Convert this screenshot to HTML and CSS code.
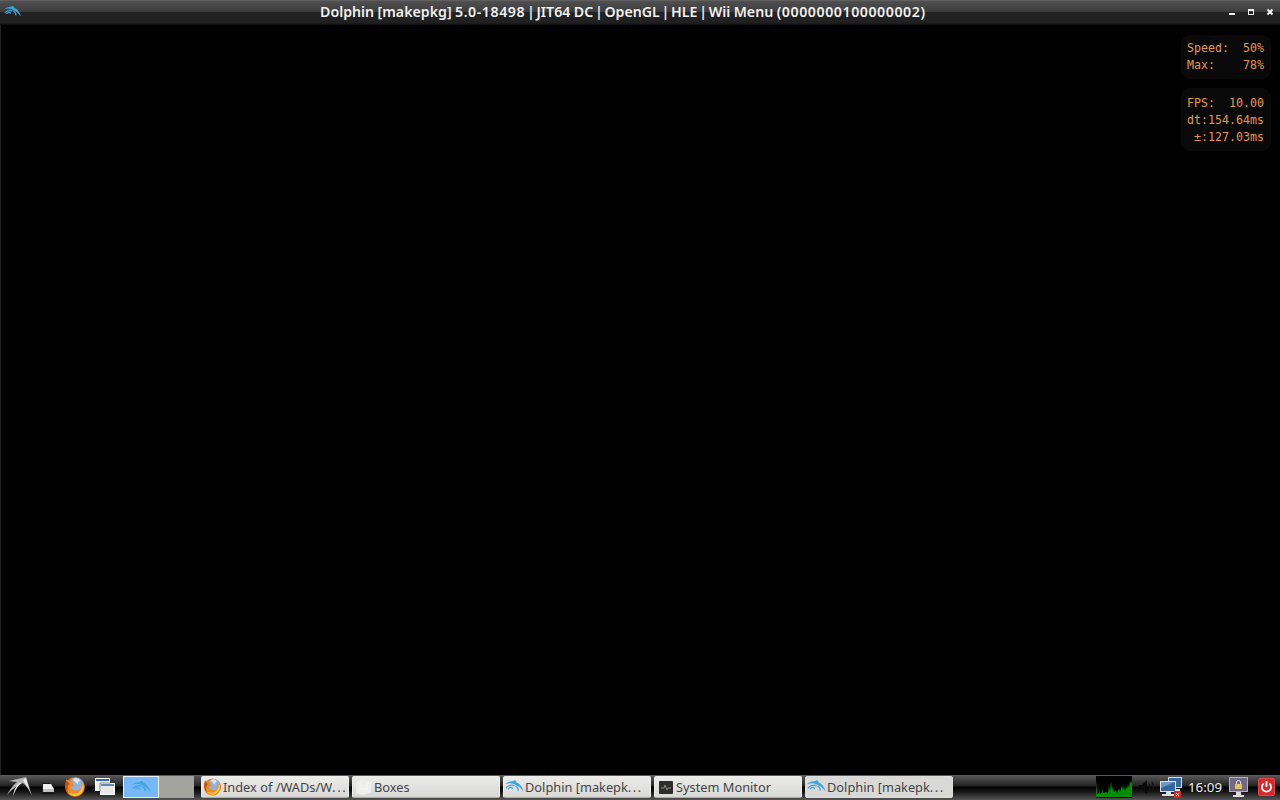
FILE: index.html
```
<!DOCTYPE html>
<html lang="en">
<head>
    <meta charset="UTF-8">
    <title>Dolphin</title>
    <link rel="stylesheet" href="styles.css">
</head>
<body>
    <!-- Shared icons -->
    <svg class="defs" width="0" height="0">
        <symbol id="dolphin" viewBox="0 0 20 16">
            <path d="M0 5Q3 2 8 2L10 1Q12 1 12 3Q17 5 20 13Q15 7 10 5Q5 3 0 5Z" fill="#3aa5df"/>
            <path d="M1 9Q5 5 10 6.5M3 10Q7 7 8 10M11 7Q14 8 14 12" fill="none" stroke="#3aa5df" stroke-width="1.3"/>
        </symbol>
        <symbol id="firefox" viewBox="0 0 20 20">
            <circle cx="10" cy="10" r="9" fill="#e77817"/>
            <circle cx="11" cy="8" r="6.5" fill="#8fb3d9"/>
            <path d="M8 3Q11 0 15 4Q12 5 13 8Q10 6 8 3Z" fill="#d4e5f3"/>
            <path d="M2 3Q4 5 8 5Q7 7 9 9L6 10Q8 14 13 13Q17 12 16 6Q20 11 16 16Q12 20 6 17Q0 13 2 3Z" fill="#ed8a22"/>
            <path d="M17 6Q20 12 14 17Q8 20 4 15Q12 18 15 13Q17 10 17 6Z" fill="#f9c646"/>
            <path d="M2 4Q0 11 4 16Q2 10 5 7Z" fill="#c4491b"/>
        </symbol>
    </svg>

    <div class="titlebar">
        <svg class="title-icon" width="19" height="14"><use href="#dolphin"/></svg>
        <div class="title">Dolphin [makepkg] <span class="num">5.0-18498</span> <span class="bar">|</span> JIT64 DC <span class="bar">|</span> OpenGL <span class="bar">|</span> HLE <span class="bar">|</span> Wii Menu <span class="num">(0000000100000002)</span></div>
        <svg class="window-buttons" width="48" height="24">
            <path d="M3 14H9" stroke="#eee" stroke-width="2"/>
            <path d="M22 9.5H28M22.5 9V15M27.5 9V15M22 14.5H28" stroke="#eee" stroke-width="1"/>
            <path d="M22 10H28" stroke="#eee" stroke-width="2"/>
            <path d="M41.5 9.5L46.5 14.5M46.5 9.5L41.5 14.5" stroke="#eee" stroke-width="2"/>
        </svg>
    </div>

    <div class="screen">
        <pre class="stats">Speed:  50%
Max:    78%</pre>
        <pre class="stats fps">FPS:  10.00
dt:154.64ms
 ±:127.03ms</pre>
    </div>

    <div class="taskbar">
        <div class="launchers">
            <svg width="34" height="22" viewBox="0 0 34 22">
                <path d="M9 5L26 1L32 20Q28 11 23 7Q16 9 7 19Q11 11 17 6Z" fill="#b5b5b5"/>
                <path d="M21 7Q16 12 13 20Q14 12 19 7ZM23 4L26 2L29 13Z" fill="#eee"/>
            </svg>
            <svg width="28" height="22" viewBox="0 0 28 22">
                <path d="M8 7H15L20 12V18H8Z" fill="#1b1b1b"/>
                <path d="M9 8H17L20 13H9Z" fill="#eee"/>
                <path d="M9 13H20V16H9Z" fill="#c2c2c2"/>
            </svg>
            <svg width="26" height="22" viewBox="0 0 26 22">
                <use href="#firefox" x="2" y="0" width="22" height="22"/>
            </svg>
            <svg width="33" height="22" viewBox="0 0 33 22">
                <rect x="7.5" y="2.5" width="14" height="12" fill="#eee" stroke="#fff"/>
                <rect x="8" y="3" width="13" height="2" fill="#3465a4"/>
                <rect x="12.5" y="7.5" width="14" height="11" fill="#e8e8e8" stroke="#fff"/>
                <path d="M12 7H22M12 7V15" stroke="#888"/>
                <rect x="13" y="8" width="13" height="2" fill="#6389b7"/>
            </svg>
        </div>
        <div class="pager">
            <div class="desk active"><svg width="19" height="15"><use href="#dolphin"/></svg></div>
            <div class="desk"></div>
        </div>
        <div class="tasks">
            <div class="task"><svg width="19" height="20"><use href="#firefox"/></svg><span>Index of /WADs/W<span class="dots">...</span></span></div>
            <div class="task">
                <svg width="19" height="20">
                    <path d="M2 5L9 3L17 5V16L9 18L2 16Z" fill="#eeeeec"/>
                    <path d="M3 15L6 12H13L16 15M6 12V5M13 12V5" fill="none" stroke="#f5f5f5"/>
                </svg><span>Boxes</span>
            </div>
            <div class="task"><svg width="19" height="18"><use href="#dolphin"/></svg><span>Dolphin [makepk<span class="dots">...</span></span></div>
            <div class="task">
                <svg width="19" height="20">
                    <rect x="3" y="4" width="14" height="13" rx="1" fill="#2d2d2d"/>
                    <path d="M5 11H8L9 8L11 13L12 11H15" fill="none" stroke="#888"/>
                </svg><span>System Monitor</span>
            </div>
            <div class="task last"><svg width="19" height="18"><use href="#dolphin"/></svg><span>Dolphin [makepk<span class="dots">...</span></span></div>
        </div>
        <div class="tray">
            <svg width="36" height="22">
                <rect width="36" height="22" fill="#000"/>
                <path d="M0 21V5L1 16V18L3 17V13L4 18L6 16L7 12V17L8 17L10 16L12 18L13 10L14 15L15 5L16 14L17 11L18 16L20 14L21 17L23 12L24 16L26 9L27 14L28 10L29 15L30 11L31 13L32 8L33 12L34 5L35 8L36 4V21Z" fill="#009000"/>
            </svg>
            <svg width="26" height="22">
                <path d="M7 9H10L15 4V18L10 13H7Z" fill="#080808"/>
                <path d="M17 8Q19 11 17 14M20 6Q23 11 20 16" fill="none" stroke="#151515" stroke-width="1.5"/>
            </svg>
            <svg width="26" height="23">
                <rect x="10.5" y="1.5" width="13" height="10" fill="#37679f" stroke="#ddd"/>
                <path d="M14 14H22" stroke="#ddd" stroke-width="2"/>
                <rect x="2.5" y="5.5" width="15" height="10" fill="#34659f" stroke="#e2e2e2"/>
                <path d="M3 6H17L3 12Z" fill="#6f98c4"/>
                <path d="M8 16H13V18H16V20H4V18H8Z" fill="#ddd"/>
                <rect x="16" y="15" width="7" height="7" fill="#d72a26"/>
                <path d="M18 17L21 20M21 17L18 20" stroke="#fff"/>
            </svg>
            <div class="clock">16:09</div>
            <svg class="lock" width="22" height="22">
                <rect x="1.5" y="1.5" width="18" height="14" fill="#716986" stroke="#b5b4bb"/>
                <path d="M8.5 9V6Q8.5 4.5 10.5 4.5T12.5 6V9" fill="none" stroke="#ddd"/>
                <rect x="7" y="8" width="7" height="5" fill="#dfc55e"/>
                <path d="M8 16H13V19H16V21H5V19H8Z" fill="#ddd"/>
            </svg>
            <svg class="power" width="17" height="18">
                <rect x=".5" y=".5" width="16" height="17" rx="1.5" fill="#d8282d" stroke="#e04a4a"/>
                <path d="M5.7 5.4A4.6 4.6 0 1 0 11.3 5.4M8.5 3V9" fill="none" stroke="#fff" stroke-width="1.8"/>
            </svg>
        </div>
    </div>
</body>
</html>
```

FILE: styles.css
```
body {
    margin: 0;
    height: 800px;
    display: flex;
    flex-direction: column;
    background: #000;
    overflow: hidden;
    font-family: "Noto Sans", sans-serif;
}
svg {
    display: block;
    flex: none;
}
.defs {
    position: absolute;
}
.titlebar {
    height: 25px;
    display: flex;
    align-items: flex-start;
    box-sizing: border-box;
    border-top: 1px solid #5f5f5f;
    background: linear-gradient(#505050, #3c3c3c 11px, #222 11px, #202020 22px, #080808 24px);
}
.title-icon {
    margin: 4px 0 0 3px;
}
.title {
    flex: 1;
    padding-left: 298px;
    color: #f0f0f0;
    font-size: 14.2px;
    font-weight: 600;
    line-height: 21px;
    word-spacing: -0.3px;
    white-space: nowrap;
}
.num {
    letter-spacing: 0.55px;
}
.bar {
    margin: 0 -1.7px;
}
.window-buttons {
    margin-right: 6px;
    margin-top: -1px;
}
.screen {
    flex: 1;
    display: flex;
    flex-direction: column;
    align-items: flex-end;
    padding: 10px 9px 0 0;
    border-left: 1px solid #222;
}
.stats {
    margin: 0 0 9px;
    padding: 5px 7px 5px 6px;
    border-radius: 9px;
    background: #090909;
    color: #e3984a;
    font-family: "DejaVu Sans Mono", monospace;
    font-size: 11.63px;
    line-height: 17px;
}
.fps {
    padding-top: 7px;
}
.taskbar {
    height: 25px;
    display: flex;
    align-items: flex-start;
    box-sizing: border-box;
    border-top: 1px solid #5a5a5a;
    background: linear-gradient(#555, #222 10px, #000 11px, #171717 16px, #555 24px);
}
.launchers {
    display: flex;
    width: 123px;
}
.pager {
    display: flex;
    width: 78px;
    height: 22px;
}
.desk {
    width: 35px;
    background: #a3a39d;
}
.active {
    width: 36px;
    box-sizing: border-box;
    border: 1px solid #e8f2fc;
    background: #77b8f8;
    display: flex;
    align-items: center;
    justify-content: center;
}
.tasks {
    display: flex;
    gap: 3px;
}
.task {
    width: 148px;
    height: 22px;
    display: flex;
    align-items: center;
    box-sizing: border-box;
    padding-left: 1px;
    border: 1px solid #ededed;
    border-bottom-color: #aaa;
    border-radius: 2px;
    background: linear-gradient(#ebebe9, #d8d8d6);
    color: #444;
    font-size: 12.8px;
    white-space: nowrap;
}
.task > span {
    margin-left: 1px;
}
.dots {
    letter-spacing: 1.6px;
}
.last {
    background: #d9d9d8;
    border-color: #ddd;
}
.tray {
    display: flex;
    height: 22px;
    align-items: center;
    margin-left: auto;
    padding-right: 5px;
}
.clock {
    width: 40px;
    padding-left: 4px;
    color: #ededed;
    font-size: 13.3px;
}
.power {
    margin-left: 8px;
}
```
